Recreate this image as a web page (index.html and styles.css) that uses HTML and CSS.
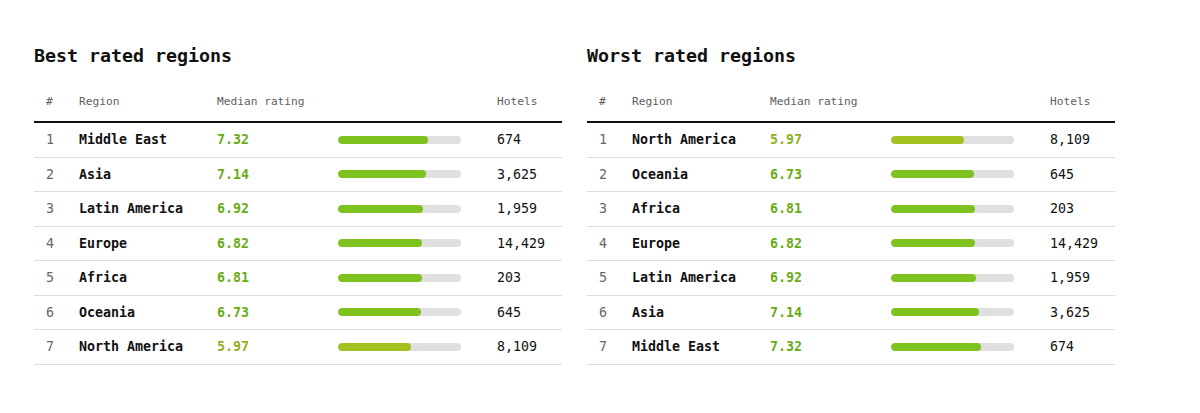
FILE: index.html
```html
<!DOCTYPE html>
<html>
<head>
<meta charset="utf-8">
<link rel="stylesheet" href="styles.css">
</head>
<body>
<div class="page">
  <section class="panel">
    <h2 class="title">Best rated regions</h2>
    <div class="table">
      <div class="row head"><span>#</span><span>Region</span><span>Median rating</span><span></span><span>Hotels</span></div>
      <div class="row"><span class="idx">1</span><span class="name">Middle East</span><span class="rate">7.32</span><span class="track"><span class="fill" style="width:73.2%"></span></span><span class="num">674</span></div>
      <div class="row"><span class="idx">2</span><span class="name">Asia</span><span class="rate">7.14</span><span class="track"><span class="fill" style="width:71.4%"></span></span><span class="num">3,625</span></div>
      <div class="row"><span class="idx">3</span><span class="name">Latin America</span><span class="rate">6.92</span><span class="track"><span class="fill" style="width:69.2%"></span></span><span class="num">1,959</span></div>
      <div class="row"><span class="idx">4</span><span class="name">Europe</span><span class="rate">6.82</span><span class="track"><span class="fill" style="width:68.2%"></span></span><span class="num">14,429</span></div>
      <div class="row"><span class="idx">5</span><span class="name">Africa</span><span class="rate">6.81</span><span class="track"><span class="fill" style="width:68.1%"></span></span><span class="num">203</span></div>
      <div class="row"><span class="idx">6</span><span class="name">Oceania</span><span class="rate">6.73</span><span class="track"><span class="fill" style="width:67.3%"></span></span><span class="num">645</span></div>
      <div class="row"><span class="idx">7</span><span class="name">North America</span><span class="rate low">5.97</span><span class="track"><span class="fill low" style="width:59.7%"></span></span><span class="num">8,109</span></div>
    </div>
  </section>
  <section class="panel">
    <h2 class="title">Worst rated regions</h2>
    <div class="table">
      <div class="row head"><span>#</span><span>Region</span><span>Median rating</span><span></span><span>Hotels</span></div>
      <div class="row"><span class="idx">1</span><span class="name">North America</span><span class="rate low">5.97</span><span class="track"><span class="fill low" style="width:59.7%"></span></span><span class="num">8,109</span></div>
      <div class="row"><span class="idx">2</span><span class="name">Oceania</span><span class="rate">6.73</span><span class="track"><span class="fill" style="width:67.3%"></span></span><span class="num">645</span></div>
      <div class="row"><span class="idx">3</span><span class="name">Africa</span><span class="rate">6.81</span><span class="track"><span class="fill" style="width:68.1%"></span></span><span class="num">203</span></div>
      <div class="row"><span class="idx">4</span><span class="name">Europe</span><span class="rate">6.82</span><span class="track"><span class="fill" style="width:68.2%"></span></span><span class="num">14,429</span></div>
      <div class="row"><span class="idx">5</span><span class="name">Latin America</span><span class="rate">6.92</span><span class="track"><span class="fill" style="width:69.2%"></span></span><span class="num">1,959</span></div>
      <div class="row"><span class="idx">6</span><span class="name">Asia</span><span class="rate">7.14</span><span class="track"><span class="fill" style="width:71.4%"></span></span><span class="num">3,625</span></div>
      <div class="row"><span class="idx">7</span><span class="name">Middle East</span><span class="rate">7.32</span><span class="track"><span class="fill" style="width:73.2%"></span></span><span class="num">674</span></div>
    </div>
  </section>
</div>
</body>
</html>
```
FILE: styles.css
```css
html, body {
  margin: 0;
  padding: 0;
  background: #ffffff;
}
body {
  font-family: "DejaVu Sans Mono", "Liberation Mono", monospace;
  color: #111111;
}
.page {
  display: flex;
  gap: 25px;
  padding: 44px 0 0 34px;
}
.panel {
  width: 528px;
}
.title {
  margin: 0;
  font-size: 18.3px;
  font-weight: bold;
  line-height: 24px;
  color: #111111;
}
.table {
  margin-top: 25px;
}
.row {
  display: grid;
  grid-template-columns: 45px 138px 121px 159px 65px;
  align-items: center;
  height: 33.5px;
  border-bottom: 1px solid #dddddd;
  font-size: 13.3px;
}
.row > span:first-child {
  padding-left: 12px;
}
.row.head {
  height: 28px;
  border-bottom: 2px solid #111111;
  font-size: 11.2px;
  color: #5e5e5e;
  align-items: start;
}
.row.head > span {
  padding-top: 2px;
}
.idx {
  color: #666666;
}
.name {
  font-weight: bold;
}
.rate {
  font-weight: bold;
  color: #6aab14;
}
.rate.low {
  color: #8fb11c;
}
.track {
  display: block;
  width: 123px;
  height: 8px;
  border-radius: 4px;
  background: #e0e0e0;
  overflow: hidden;
}
.fill {
  display: block;
  height: 100%;
  border-radius: 4px;
  background: #7ec21f;
}
.fill.low {
  background: #a3c21f;
}
.num {
  color: #111111;
}
```
